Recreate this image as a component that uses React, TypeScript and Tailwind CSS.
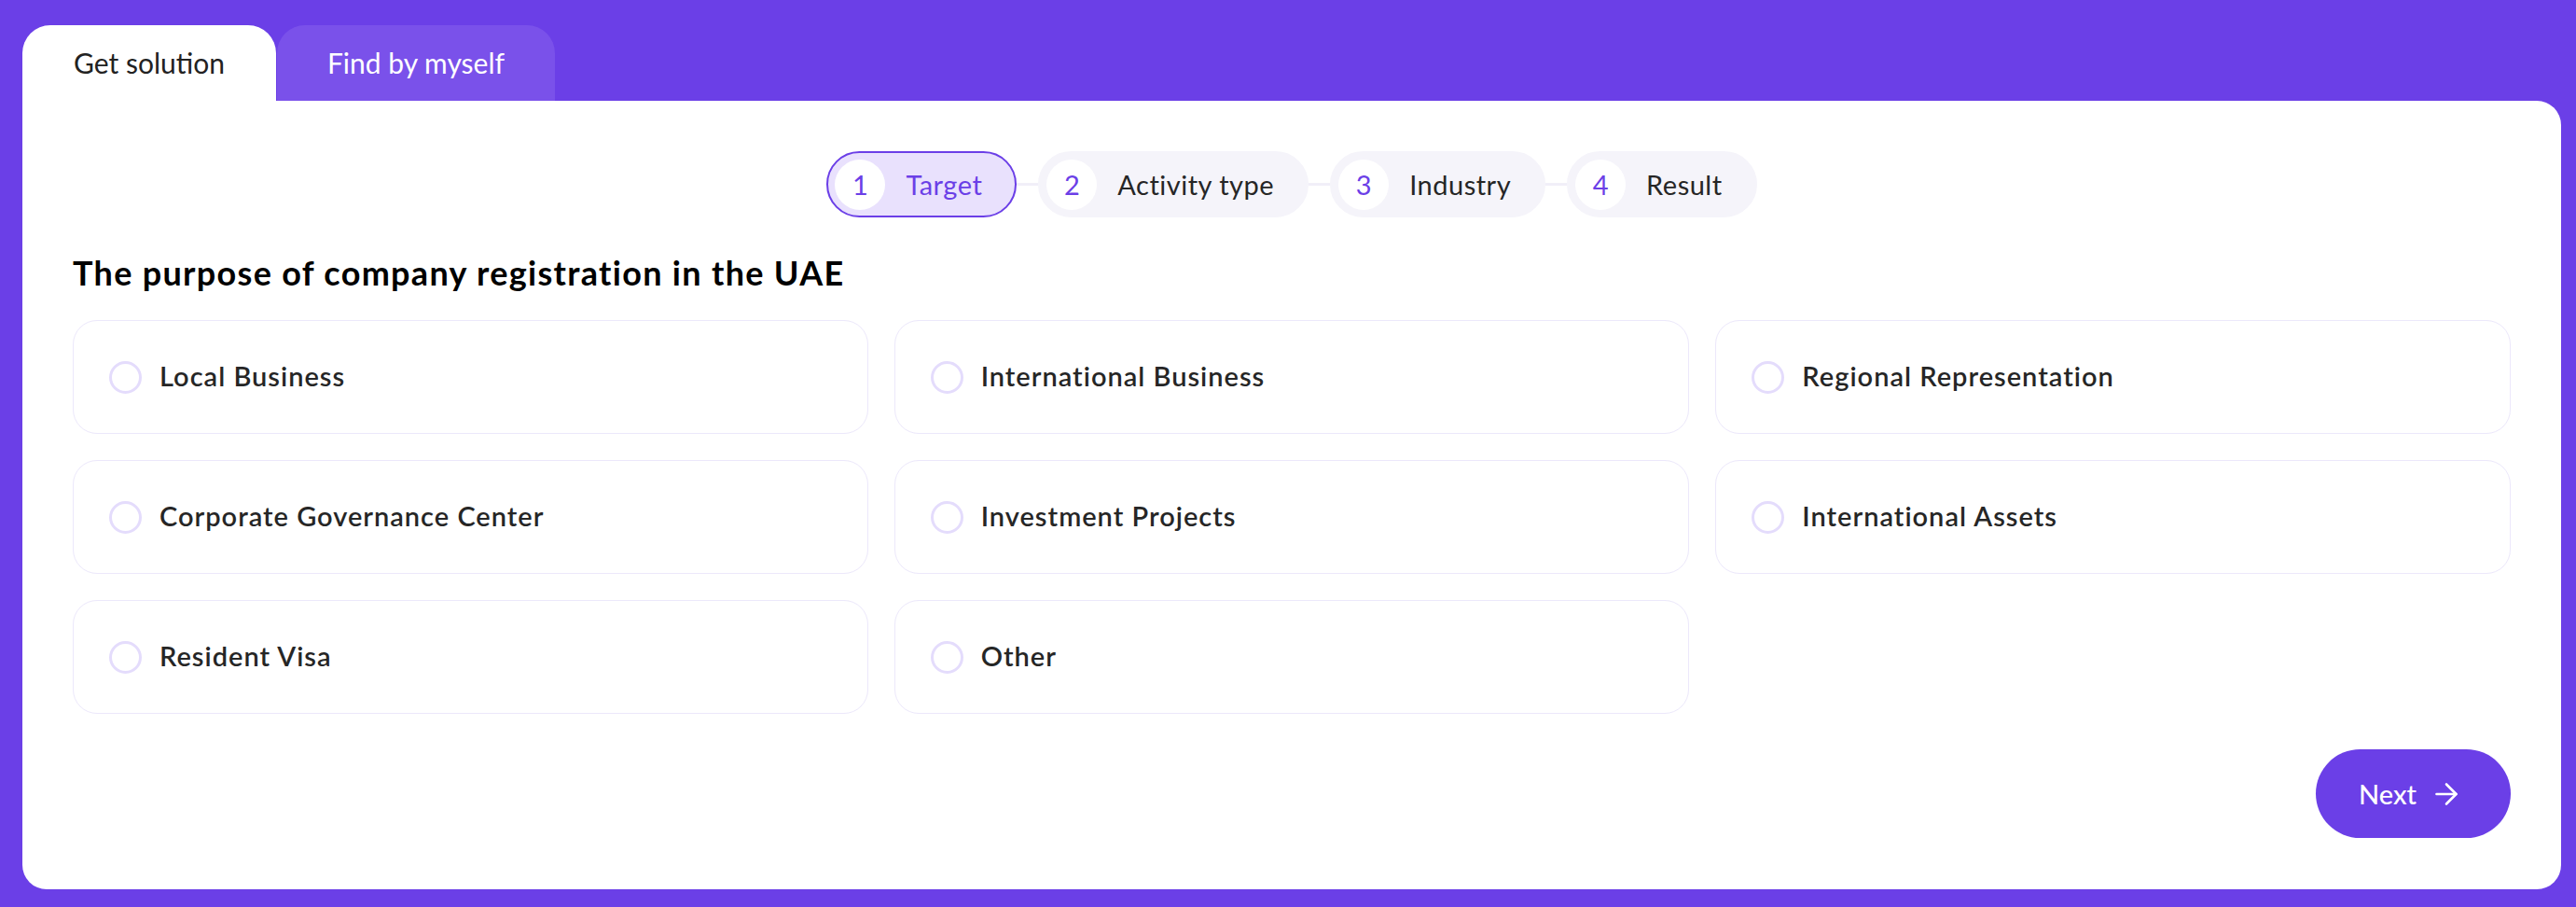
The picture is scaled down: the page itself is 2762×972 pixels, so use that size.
import { ArrowRight } from 'lucide-react';

const steps = [
  { n: 1, label: 'Target', active: true },
  { n: 2, label: 'Activity type', active: false },
  { n: 3, label: 'Industry', active: false },
  { n: 4, label: 'Result', active: false },
];

const options = [
  'Local Business',
  'International Business',
  'Regional Representation',
  'Corporate Governance Center',
  'Investment Projects',
  'International Assets',
  'Resident Visa',
  'Other',
];

function Stepper() {
  return (
    <div className="flex items-center justify-center">
      {steps.map((step, i) => (
        <div key={step.n} className="flex items-center">
          {i > 0 && <div className="w-[23px] h-[3px] bg-[#F1EFF8]" />}
          <div
            className={`flex items-center h-[71px] rounded-full border-2 pl-[7px] pr-[35px] gap-[22px] ${
              step.active ? 'bg-[#E9E1FD] border-[#6B3FE7]' : 'bg-[#F5F4FA] border-[#F5F4FA]'
            }`}
          >
            <div className="w-[54px] h-[54px] rounded-full bg-white flex items-center justify-center text-[29px] text-[#6B3FE7]">
              {step.n}
            </div>
            <span className={`text-[29px] tracking-[0.5px] ${step.active ? 'text-[#6B3FE7]' : 'text-[#262626]'}`}>
              {step.label}
            </span>
          </div>
        </div>
      ))}
    </div>
  );
}

export default function App() {
  return (
    <div className="min-h-screen bg-[#6B3FE7] pl-6 pr-4 pt-[27px] pb-[19px] font-['Lato',sans-serif]">
      {/* Tabs */}
      <div className="flex gap-px">
        <button className="h-[81px] px-[55px] rounded-t-[30px] bg-white text-[30px] text-[#222]">Get solution</button>
        <button className="h-[81px] px-[54px] rounded-t-[30px] bg-[#7A51EA] text-[30px] text-white">Find by myself</button>
      </div>

      {/* Panel */}
      <div className="bg-white rounded-[26px] rounded-tl-none px-[54px] pt-[54px] pb-[55px]">
        <Stepper />

        <h2 className="mt-[37px] text-[36px] leading-[44px] font-bold tracking-[1.3px] text-black">
          The purpose of company registration in the UAE
        </h2>

        <div className="mt-[29px] grid grid-cols-3 gap-[28px]">
          {options.map((opt) => (
            <label
              key={opt}
              className="h-[122px] rounded-[26px] border-[1.5px] border-[#ECE8FB] pl-[38px] flex items-center gap-[19px] cursor-pointer"
            >
              <span className="w-[35px] h-[35px] rounded-full border-[3px] border-[#E4DCFC] shrink-0" />
              <span className="text-[29px] font-semibold tracking-[1px] text-[#262626] -mt-[2px]">{opt}</span>
            </label>
          ))}
        </div>

        <div className="mt-[38px] flex justify-end">
          <button className="h-[95px] w-[209px] rounded-full bg-[#6B3FE7] text-white text-[29px] font-medium flex items-center pl-[46px] gap-[14px]">
            <span>Next</span>
            <ArrowRight size={36} strokeWidth={1.75} />
          </button>
        </div>
      </div>
    </div>
  );
}
